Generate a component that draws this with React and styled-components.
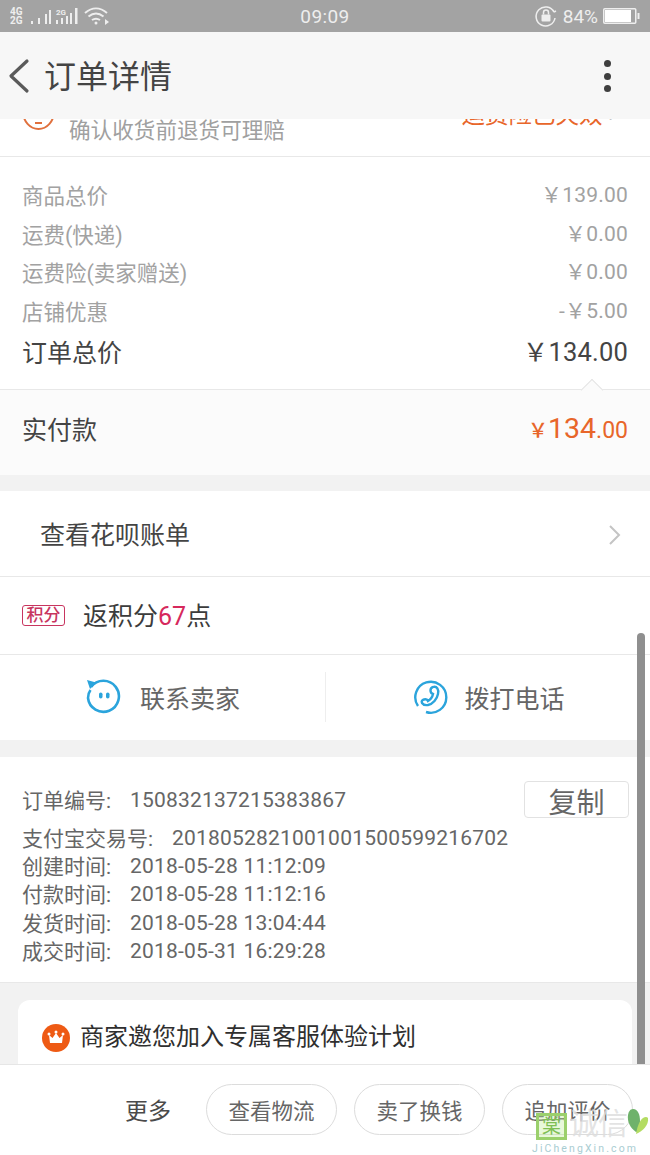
import React from "react";
import styled, { createGlobalStyle } from "styled-components";

const Global = createGlobalStyle`
  html, body { margin: 0; padding: 0; background: #fff; }
  body { font-family: Roboto, "Noto Sans CJK SC", "Noto Sans", sans-serif; }
  * { box-sizing: border-box; }
`;
const Page = styled.div`
  position: relative; width: 650px; height: 1155px; display: flex; flex-direction: column;
  overflow: hidden; background: #fff; color: #444;
`;
const StatusBar = styled.div`
  height: 32px; flex: none; background: #a3a3a3; color: #eee; display: flex; align-items: center;
  justify-content: space-between; padding: 0 10px; font-size: 19px;
`;
const StatusGroup = styled.div`display: flex; align-items: center; gap: ${p => p.$gap || 4}px; width: 118px; justify-content: ${p => p.$end ? "flex-end" : "flex-start"};`;
const Clock = styled.div`letter-spacing: .4px;`;
const Header = styled.header`
  height: 87px; flex: none; background: #f7f7f7; display: flex; align-items: center;
  padding: 0 39px 0 7px; color: #444;
`;
const Title = styled.h1`flex: 1; margin: 2px 0 0 14px; font-size: 32px; font-weight: 400; line-height: 1;`;
const Dots = styled.div`display: flex; flex-direction: column; gap: 5.5px; margin-top: 1px;`;
const Dot = styled.i`width: 7px; height: 7px; border-radius: 50%; background: #3f3f3f; display: block;`;
const Scroll = styled.main`flex: 1; min-height: 0; overflow: hidden; background: #f2f2f2;`;
const Section = styled.section`
  background: ${p => p.$bg || "#fff"}; border-bottom: ${p => p.$line ? "1px solid #e8e8e8" : "0"};
  margin-bottom: ${p => p.$gap || 0}px;
`;
const CutRow = styled(Section)`
  height: 38px; position: relative; overflow: hidden; padding: 0 35px 0 69px; display: flex;
  justify-content: space-between; color: #a0a0a0; font-size: 21.6px; line-height: 24px;
`;
const CutNote = styled.div`margin-top: 0;`;
const CutBadge = styled.div`
  position: absolute; left: 22px; top: -26px; width: 33px; height: 37px; border: 2.5px solid #e0703d; border-radius: 50%;
  &::after { content: ""; position: absolute; left: 11px; top: 27px; width: 7px; height: 2px; background: #e0703d; }
`;
const CutAlert = styled.div`margin-top: -19px; font-size: 23.500px; color: #e8662a; line-height: 30px; display: flex; gap: 6px;`;
const CutChevron = styled.span`color: #c4c4c4; font-size: 22px;`;
const Prices = styled(Section)`padding: 18px 22px 19px;`;
const PriceRow = styled.div`
  display: flex; justify-content: space-between; align-items: center; height: 38.75px;
  margin-top: ${p => p.$big ? 1 : 0}px;
  font-size: ${p => p.$big ? 25 : 21.5}px; color: ${p => p.$big ? "#444" : "#a2a2a2"};
`;
const PriceLabel = styled.span`margin-top: ${p => p.$big ? 2 : 0}px;`;
const Amount = styled.span`font-size: ${p => p.$big ? 25.5 : 21}px; letter-spacing: .2px; margin-top: ${p => p.$big ? -1 : -3}px;`;
const PayRow = styled(Section)`
  position: relative; height: 86px; border-top: 1px solid #e8e8e8; display: flex; align-items: center;
  justify-content: space-between; padding: 0 22px 8px; font-size: 25px; color: #444;
`;
const Caret = styled.i`
  position: absolute; right: 50px; top: -8px; width: 16px; height: 16px; background: #fbfbfb;
  border-left: 1px solid #e4e4e4; border-top: 1px solid #e4e4e4; transform: rotate(45deg);
`;
const PayAmount = styled.span`color: #e8662a; font-size: 23px; display: flex; align-items: baseline;`;
const PayYen = styled.span`font-size: 20px; font-weight: 500;`;
const PayMain = styled.span`font-size: 28.5px;`;
const BillRow = styled(Section)`
  height: 86px; display: flex; align-items: center; justify-content: space-between;
  padding: 0 28px 0 40px; font-size: 25px; color: #444;
`;
const ChevronSlot = styled.span`display: flex; margin-top: 3px;`;
const PointsRow = styled(Section)`height: 78px; display: flex; align-items: center; padding: 0 22px 2px; font-size: 25px; color: #3c3c3c;`;
const PointsTag = styled.span`
  width: 43px; height: 21px; border: 1px solid #c8355f; border-radius: 3px; color: #c8355f; font-weight: 500;
  font-size: 17px; line-height: 18px; text-align: center; margin: 2px 18px 0 0; white-space: nowrap;
`;
const PointsNum = styled.span`color: #d6285c;`;
const Actions = styled(Section)`height: 85px; display: flex; align-items: center;`;
const Action = styled.div`
  flex: none; width: ${p => p.$w}px; height: 50px; display: flex; align-items: center; justify-content: center; gap: ${p => p.$gap}px;
  font-size: 25px; color: #666; border-right: ${p => p.$div ? "1px solid #eee" : "0"};
`;
const Info = styled(Section)`
  height: 226px; position: relative; padding: 29px 22px 0; font-size: 21px; color: #666;
`;
const InfoRow = styled.div`
  display: flex; height: 28.3px; align-items: center; margin-bottom: ${p => p.$mb || 0}px; white-space: nowrap;
`;
const InfoLabel = styled.span`margin-top: -2px;`;
const InfoValue = styled.span`margin-left: ${p => p.$ml}px; letter-spacing: .2px;`;
const CopyBtn = styled.div`
  position: absolute; right: 21px; top: 24px; width: 105px; height: 37px; border: 1px solid #e2e2e2; border-radius: 4px;
  font-size: 28px; color: #666; display: flex; align-items: center; justify-content: center; padding-top: 3px;
`;
const Card = styled.div`
  margin: 17px 18px 0; height: 120px; background: #fff; border-radius: 12px; padding: 19px 24px;
  display: flex; align-items: flex-start; gap: 10px; font-size: 24px; color: #2f2f2f; line-height: 36px;
`;
const CrownBadge = styled.span`
  width: 28px; height: 28px; border-radius: 50%; background: #ee5a14; display: flex; align-items: center; justify-content: center; flex: none; margin-top: 5px;
`;
const Footer = styled.footer`
  flex: none; height: 91px; background: #fff; border-top: 1px solid #e6e6e6; display: flex; align-items: center;
  justify-content: flex-end; padding: 0 17px 2px 0; gap: 17px;
`;
const More = styled.span`font-size: 23px; color: #4a4a4a; margin-right: 18px;`;
const Pill = styled.div`
  width: 131px; height: 51px; border: 1px solid #dcdcdc; border-radius: 26px; font-size: 21.5px;
  color: #666; display: flex; align-items: center; justify-content: center; white-space: nowrap;
`;
const Scrollbar = styled.div`
  position: absolute; left: 637px; top: 633px; bottom: 91px; width: 8px; border-radius: 4px 4px 0 0; background: #8f8f8f;
`;
const Watermark = styled.div`
  position: absolute; left: 532px; bottom: 0; width: 118px; height: 47px; pointer-events: none;
`;
const WmMark = styled.div`
  position: absolute; left: 4px; top: 5px; width: 31px; height: 27px; border: 3px solid #9bd06c; color: #7fbf55;
  font-size: 19px; line-height: 21px; text-align: center; background: rgba(190,235,150,.35);
`;
const WmName = styled.div`
  position: absolute; left: 37px; top: 0; color: rgba(222,222,222,.85); font-size: 30px; line-height: 32px; white-space: nowrap; letter-spacing: -1px;
`;
const WmUrl = styled.div`
  position: absolute; left: 0; bottom: 0; color: #a9cdd2; font-size: 10.5px; letter-spacing: 2.100px; white-space: nowrap; line-height: 13px;
`;
const WmHeartBox = styled.span`position: absolute; left: 95px; top: 0; display: flex;`;

const Signal = () => (
  <svg width="70" height="22" viewBox="0 0 70 22" fill="#eee">
    <text x="0" y="10" fontSize="10" fontFamily="Roboto" fontWeight="700">4G</text>
    <text x="0" y="19" fontSize="10" fontFamily="Roboto" fontWeight="700">2G</text>
    <rect x="21" y="16" width="2" height="3" /><rect x="28" y="13" width="2" height="6" />
    <rect x="35" y="9" width="2" height="10" /><rect x="39" y="5" width="2" height="14" />
    <text x="46" y="10" fontSize="8" fontFamily="Roboto" fontWeight="700">2G</text>
    <rect x="46" y="15" width="2" height="4" /><rect x="51" y="13" width="2" height="6" />
    <rect x="56" y="11" width="2" height="8" /><rect x="60" y="8" width="2" height="11" />
    <rect x="65" y="3" width="2.500" height="16" />
  </svg>
);
const Wifi = () => (
  <svg width="26" height="20" viewBox="0 0 26 20" fill="none" stroke="#eee" strokeWidth="2">
    <path d="M1 7c7-6 15-6 22 0M4.500 10.500c5-4 10-4 15 0M8 14c3-2 5-2 8 0" />
    <circle cx="12" cy="17" r="1.500" fill="#eee" stroke="none" />
    <path d="M21 13l4 3-4 3z" fill="#eee" stroke="none" />
  </svg>
);
const Lock = () => (
  <svg width="24" height="24" viewBox="0 0 24 24" fill="none" stroke="#eee" strokeWidth="1.500">
    <path d="M20 8a9.500 9.500 0 1 0 1 6" />
    <path d="M20 8l2-1M20 8l-1-2" />
    <rect x="7.500" y="10.500" width="9" height="7" fill="#eee" stroke="none" rx="1" />
    <path d="M9.500 10.500V8.500a2.500 2.500 0 0 1 5 0v2" />
  </svg>
);
const Battery = () => (
  <svg width="37" height="16" viewBox="0 0 37 16">
    <rect x=".75" y=".75" width="32" height="14.500" fill="none" stroke="#eee" strokeWidth="1.500" rx="1" />
    <rect x="2" y="2" width="26" height="12" fill="#fff" />
    <rect x="34.500" y="5" width="2" height="6" fill="#eee" />
  </svg>
);
const Back = () => (
  <svg width="23" height="36" viewBox="0 0 23 36" fill="none" stroke="#5a5a5a" strokeWidth="3.200" strokeLinecap="round" strokeLinejoin="round">
    <path d="M20 3 L4 18 L20 33" />
  </svg>
);
const Chevron = () => (
  <svg width="14" height="22" viewBox="0 0 14 22" fill="none" stroke="#c4c4c4" strokeWidth="2">
    <path d="M2 2l9 9-9 9" />
  </svg>
);
const ChatIcon = () => (
  <svg width="36" height="36" viewBox="0 0 36 36" fill="none" stroke="#2ba4dc" strokeWidth="2.600">
    <path d="M6 8A15.500 15.500 0 1 1 3 19c0-3.500 1-6 2.500-8" />
    <path d="M2 1l9 2.500L5 10z" fill="#2ba4dc" stroke="none" />
    <rect x="14" y="13.500" width="3.500" height="6" rx="1.750" fill="#2ba4dc" stroke="none" />
    <rect x="21" y="13.500" width="3.500" height="6" rx="1.750" fill="#2ba4dc" stroke="none" />
  </svg>
);
const PhoneIcon = () => (
  <svg width="36" height="36" viewBox="0 0 36 36" fill="none" stroke="#2ba4dc" strokeWidth="2.400">
    <path d="M5 27A15.500 15.500 0 1 1 13 33" />
    <path d="M20 8c4-1.500 6 3 5 7-1 5-5 10-10 11-3 .5-5-.5-6-2-.8-1.500 0-3 2-3.500 2-.5 3.500 0 4 1.500 2.500-1.500 4.500-4.500 5-7-1.500-.5-2.500-2-2.500-3.500 0-1.500.8-3 2.500-3.500z" />
  </svg>
);
const Crown = () => (
  <svg width="18" height="16" viewBox="0 0 18 16" fill="#fff">
    <path d="M2 5l3.500 3L9 3l3.500 5L16 5l-1 8H3z" />
    <circle cx="2" cy="4" r="1.500" /><circle cx="9" cy="2" r="1.500" /><circle cx="16" cy="4" r="1.500" />
  </svg>
);
const WmHeart = () => (
  <svg width="22" height="28" viewBox="0 0 22 28">
    <path d="M6 1c5 0 7 6 7 12s-2 11-4 11C3 20 0 13 1 7c.5-3 2-6 5-6z" fill="#6fb26b" />
    <path d="M21 10c1 7-5 13-12 16 1-6 3-13 7-16 2-1.500 4-1.500 5 0z" fill="#b4dc62" />
  </svg>
);

const prices = [
  ["商品总价", "￥139.00"], ["运费(快递)", "￥0.00"], ["运费险(卖家赠送)", "￥0.00"], ["店铺优惠", "-￥5.00"],
];
const times = [
  ["创建时间:", "2018-05-28 11:12:09"], ["付款时间:", "2018-05-28 11:12:16"],
  ["发货时间:", "2018-05-28 13:04:44"], ["成交时间:", "2018-05-31 16:29:28"],
];

export default function App() {
  return (
    <Page>
      <Global />
      <StatusBar>
        <StatusGroup $gap={4}><Signal /><Wifi /></StatusGroup>
        <Clock>09:09</Clock>
        <StatusGroup $end $gap={5}><Lock /><span>84%</span><Battery /></StatusGroup>
      </StatusBar>
      <Header>
        <Back />
        <Title>订单详情</Title>
        <Dots><Dot /><Dot /><Dot /></Dots>
      </Header>
      <Scroll>
        <CutRow $line>
          <CutBadge />
          <CutNote>确认收货前退货可理赔</CutNote>
          <CutAlert>运费险已失效<CutChevron>›</CutChevron></CutAlert>
        </CutRow>
        <Prices>
          {prices.map(([k, v]) => (
            <PriceRow key={k}><PriceLabel>{k}</PriceLabel><Amount>{v}</Amount></PriceRow>
          ))}
          <PriceRow $big><PriceLabel $big>订单总价</PriceLabel><Amount $big>￥134.00</Amount></PriceRow>
        </Prices>
        <PayRow $bg="#fbfbfb">
          <Caret />
          <span>实付款</span>
          <PayAmount><PayYen>￥</PayYen><PayMain>134</PayMain>.00</PayAmount>
        </PayRow>
        <Section $gap={16} />
        <BillRow $line><span>查看花呗账单</span><ChevronSlot><Chevron /></ChevronSlot></BillRow>
        <PointsRow $line>
          <PointsTag>积分</PointsTag>
          <span>返积分<PointsNum>67</PointsNum>点</span>
        </PointsRow>
        <Actions $gap={17}>
          <Action $w={326} $gap={19} $div><ChatIcon />联系卖家</Action>
          <Action $w={326} $gap={15}><PhoneIcon />拨打电话</Action>
        </Actions>
        <Info $line>
          <InfoRow $mb={9.5}><InfoLabel>订单编号:</InfoLabel><InfoValue $ml={19}>150832137215383867</InfoValue></InfoRow>
          <InfoRow><InfoLabel>支付宝交易号:</InfoLabel><InfoValue $ml={19}>2018052821001001500599216702</InfoValue></InfoRow>
          {times.map(([k, v]) => (
            <InfoRow key={k}><InfoLabel>{k}</InfoLabel><InfoValue $ml={19}>{v}</InfoValue></InfoRow>
          ))}
          <CopyBtn>复制</CopyBtn>
        </Info>
        <Card><CrownBadge><Crown /></CrownBadge>商家邀您加入专属客服体验计划</Card>
      </Scroll>
      <Footer>
        <More>更多</More>
        <Pill>查看物流</Pill>
        <Pill>卖了换钱</Pill>
        <Pill>追加评价</Pill>
      </Footer>
      <Scrollbar />
      <Watermark>
        <WmMark>棠</WmMark>
        <WmName>诚信</WmName>
        <WmHeartBox><WmHeart /></WmHeartBox>
        <WmUrl>JiChengXin.com</WmUrl>
      </Watermark>
    </Page>
  );
}
